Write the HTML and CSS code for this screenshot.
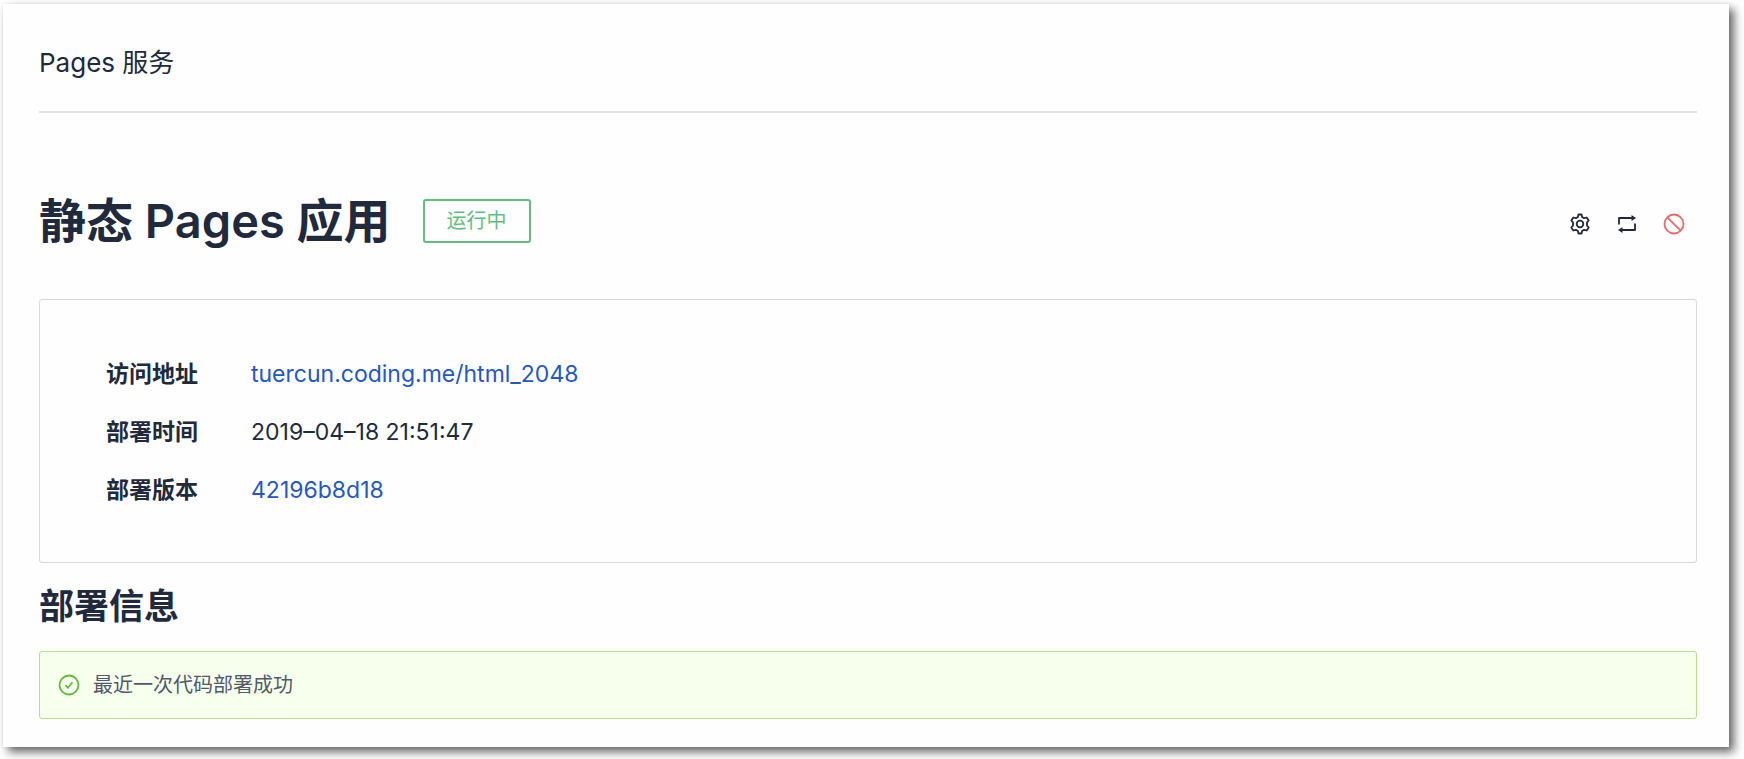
FILE: index.html
```html
<!DOCTYPE html>
<html lang="zh-CN">
<head>
  <meta charset="UTF-8">
  <title>Pages 服务</title>
  <link rel="stylesheet" href="styles.css">
</head>
<body>

<div class="panel">
  <header class="panel-header">Pages 服务</header>

  <div class="app-bar">
    <h1>静态 Pages 应用</h1>
    <span class="status">运行中</span>
    <div class="actions">
      <button type="button" aria-label="设置">
        <svg viewBox="0 0 22 22">
          <path d="M9.5 1.500h3l.6 2.500 2 1.200 2.600-.7 2 3-1.700 1.800v3.400l1.700 1.800-2 3-2.600-.7-2 1.200-.6 2.500h-3L8.900 18l-2-1.200-2.600.7-2-3L4 12.700V9.300L2.300 7.500l2-3 2.600.7L8.900 4z"/>
          <circle cx="11" cy="11" r="3.300"/>
        </svg>
      </button>
      <button type="button" aria-label="重新部署">
        <svg viewBox="0 0 22 22">
          <path d="M3 11.500V5h13M19 10.500V17H6"/>
          <path class="arrow" d="M15.500 2 20 5l-4.500 3zM6.500 14 2 17l4.500 3z"/>
        </svg>
      </button>
      <button type="button" class="stop" aria-label="停止">
        <svg viewBox="0 0 22 22">
          <circle cx="11" cy="11" r="9.500"/>
          <path d="M4.300 4.300l13.400 13.400"/>
        </svg>
      </button>
    </div>
  </div>

  <dl class="info">
    <dt>访问地址</dt>
    <dd><a href="#">tuercun.coding.me/html_2048</a></dd>
    <dt>部署时间</dt>
    <dd>2019–04–18 21:51:47</dd>
    <dt>部署版本</dt>
    <dd><a href="#">42196b8d18</a></dd>
  </dl>

  <h2>部署信息</h2>
  <div class="alert">
    <svg viewBox="0 0 22 22">
      <circle cx="11" cy="11" r="9.500"/>
      <path d="M7.500 11l2.500 2.800 4.500-5.500"/>
    </svg>
    最近一次代码部署成功
  </div>
</div>

</body>
</html>
```

FILE: styles.css
```css
* { box-sizing: border-box; }
body {
  margin: 0;
  padding: 4px 15px 13px 3px;
  background-color: #fff;
  font-family: Inter, "Noto Sans CJK SC", sans-serif;
  color: #202a3c;
}
.panel {
  padding: 0 32px 28px 36px;
  background-color: #fefefe;
  box-shadow: 5px 5px 9px rgba(0,0,0,0.6), 0 0 3px rgba(0,0,0,0.08);
}
.panel-header {
  height: 109px;
  padding-top: 39px;
  border-bottom: 2px solid #e2e2e2;
  font-size: 26px;
  line-height: 40px;
}
.app-bar {
  display: flex;
  align-items: center;
  padding: 73px 12px 43px 0;
}
h1 {
  margin: 0;
  font-size: 47px;
  line-height: 70px;
  font-weight: 600;
}
.status {
  margin-left: 32px;
  padding: 0 22px;
  border: 2px solid #60bf80;
  border-radius: 3px;
  color: #60bf80;
  font-size: 20px;
  line-height: 40px;
}
.actions {
  display: flex;
  gap: 25px;
  margin-left: auto;
  padding-top: 6px;
}
.actions button {
  padding: 0;
  border: none;
  background: none;
  color: #202a3c;
  cursor: pointer;
}
.actions .stop { color: #e86b6b; }
svg {
  display: block;
  width: 22px;
  height: 22px;
  fill: none;
  stroke: currentColor;
  stroke-width: 1.8;
  stroke-linejoin: round;
}
.arrow {
  fill: currentColor;
  stroke: none;
}
.info {
  display: grid;
  grid-template-columns: max-content 1fr;
  column-gap: 53px;
  row-gap: 22px;
  margin: 0;
  padding: 56px 66px 54px;
  border: 1px solid #d5d8dc;
  border-radius: 3px;
  font-size: 23px;
  line-height: 36px;
}
dt { font-weight: 600; }
dd { margin: 0; }
a {
  color: #2458c0;
  text-decoration: none;
}
h2 {
  margin: 17px 0 19px;
  font-size: 35px;
  line-height: 52px;
  font-weight: 600;
}
.alert {
  display: flex;
  align-items: center;
  gap: 13px;
  padding: 17px 18px;
  border: 1px solid #b2e08c;
  border-radius: 3px;
  background-color: #f7ffed;
  color: #505a6c;
  font-size: 20px;
  line-height: 32px;
}
.alert svg { color: #65b83c; }
```
